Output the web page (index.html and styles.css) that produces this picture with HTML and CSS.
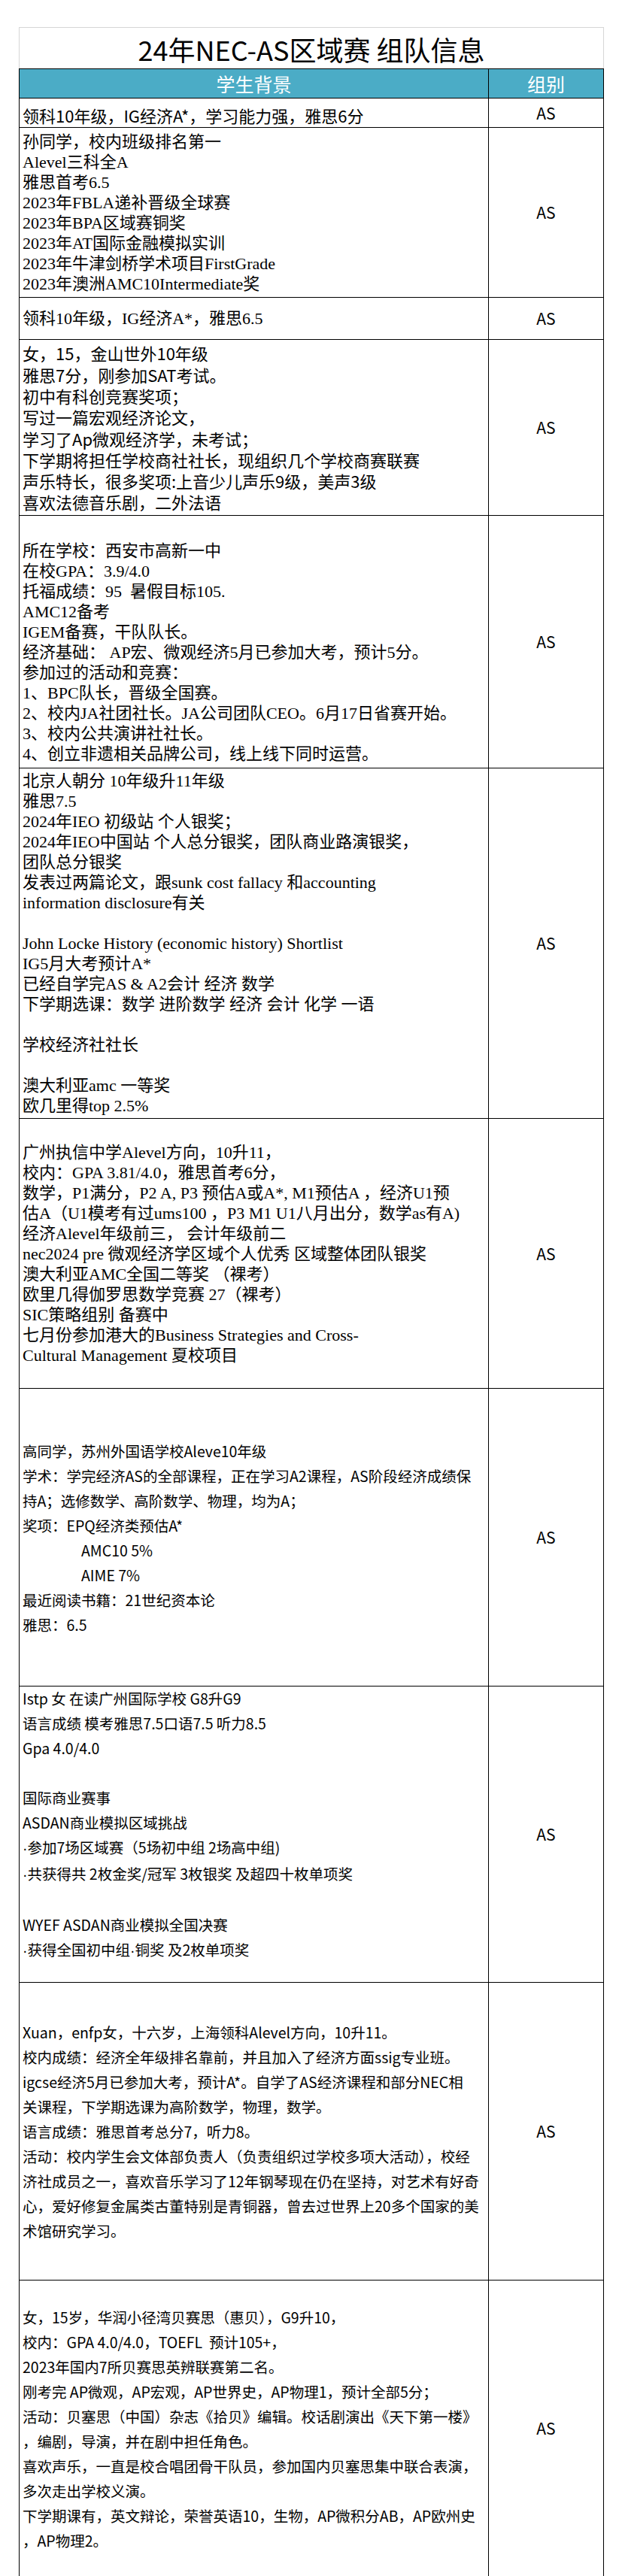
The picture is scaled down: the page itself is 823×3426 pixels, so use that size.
FILE: index.html
```html
<!DOCTYPE html>
<html lang="zh-CN">
<head>
<meta charset="utf-8">
<title>24年NEC-AS区域赛 组队信息</title>
<link rel="stylesheet" href="styles.css">
</head>
<body>
<div class="page">
  <div class="sheet">
    <div class="title">24年NEC-AS区域赛 组队信息</div>

    <div class="row hdr">
      <div class="cell">学生背景</div>
      <div class="grp">组别</div>
    </div>

    <div class="row r1">
      <div class="cell dx first"><p>领科10年级，IG经济A*，学习能力强，雅思6分</p></div>
      <div class="grp">AS</div>
    </div>

    <div class="row r2">
      <div class="cell serif">
        <p>孙同学，校内班级排名第一</p>
        <p>Alevel三科全A</p>
        <p>雅思首考6.5</p>
        <p>2023年FBLA递补晋级全球赛</p>
        <p>2023年BPA区域赛铜奖</p>
        <p>2023年AT国际金融模拟实训</p>
        <p>2023年牛津剑桥学术项目FirstGrade</p>
        <p>2023年澳洲AMC10Intermediate奖</p>
      </div>
      <div class="grp">AS</div>
    </div>

    <div class="row r3">
      <div class="cell serif"><p>领科10年级，IG经济A*，雅思6.5</p></div>
      <div class="grp">AS</div>
    </div>

    <div class="row r4">
      <div class="cell dx">
        <p>女，15，金山世外10年级</p>
        <p>雅思7分，刚参加SAT考试。</p>
        <p>初中有科创竞赛奖项；</p>
        <p>写过一篇宏观经济论文，</p>
        <p>学习了Ap微观经济学，未考试；</p>
        <p>下学期将担任学校商社社长，现组织几个学校商赛联赛</p>
        <p>声乐特长，很多奖项:上音少儿声乐9级，美声3级</p>
        <p>喜欢法德音乐剧，二外法语</p>
      </div>
      <div class="grp">AS</div>
    </div>

    <div class="row r5">
      <div class="cell serif">
        <p>&nbsp;</p>
        <p>所在学校：西安市高新一中</p>
        <p>在校GPA：3.9/4.0</p>
        <p>托福成绩：95  暑假目标105.</p>
        <p>AMC12备考</p>
        <p>IGEM备赛，干队队长。</p>
        <p>经济基础： AP宏、微观经济5月已参加大考，预计5分。</p>
        <p>参加过的活动和竞赛：</p>
        <p>1、BPC队长，晋级全国赛。</p>
        <p>2、校内JA社团社长。JA公司团队CEO。6月17日省赛开始。</p>
        <p>3、校内公共演讲社社长。</p>
        <p>4、创立非遗相关品牌公司，线上线下同时运营。</p>
      </div>
      <div class="grp">AS</div>
    </div>

    <div class="row r6">
      <div class="cell serif">
        <p>北京人朝分 10年级升11年级</p>
        <p>雅思7.5</p>
        <p>2024年IEO 初级站 个人银奖；</p>
        <p>2024年IEO中国站 个人总分银奖，团队商业路演银奖，</p>
        <p>团队总分银奖</p>
        <p>发表过两篇论文，跟sunk cost fallacy 和accounting</p>
        <p>information disclosure有关</p>
        <p>&nbsp;</p>
        <p>John Locke History (economic history) Shortlist</p>
        <p>IG5月大考预计A*</p>
        <p>已经自学完AS &amp; A2会计 经济 数学</p>
        <p>下学期选课：数学 进阶数学 经济 会计 化学 一语</p>
        <p>&nbsp;</p>
        <p>学校经济社社长</p>
        <p>&nbsp;</p>
        <p>澳大利亚amc 一等奖</p>
        <p>欧几里得top 2.5%</p>
      </div>
      <div class="grp">AS</div>
    </div>

    <div class="row r7">
      <div class="cell serif">
        <p>广州执信中学Alevel方向，10升11，</p>
        <p>校内：GPA 3.81/4.0，雅思首考6分，</p>
        <p>数学，P1满分，P2 A, P3 预估A或A*, M1预估A ，经济U1预</p>
        <p>估A（U1模考有过ums100 ，P3 M1 U1八月出分，数学as有A)</p>
        <p>经济Alevel年级前三， 会计年级前二</p>
        <p>nec2024 pre 微观经济学区域个人优秀 区域整体团队银奖</p>
        <p>澳大利亚AMC全国二等奖 （裸考）</p>
        <p>欧里几得伽罗思数学竞赛 27（裸考）</p>
        <p>SIC策略组别 备赛中</p>
        <p>七月份参加港大的Business Strategies and Cross-</p>
        <p>Cultural Management 夏校项目</p>
      </div>
      <div class="grp">AS</div>
    </div>

    <div class="row r8">
      <div class="cell yh">
        <p>高同学，苏州外国语学校Aleve10年级</p>
        <p>学术：学完经济AS的全部课程，正在学习A2课程，AS阶段经济成绩保</p>
        <p>持A；选修数学、高阶数学、物理，均为A；</p>
        <p>奖项：EPQ经济类预估A*</p>
        <p class="ind">AMC10 5%</p>
        <p class="ind">AIME 7%</p>
        <p>最近阅读书籍：21世纪资本论</p>
        <p>雅思：6.5</p>
      </div>
      <div class="grp">AS</div>
    </div>

    <div class="row r9">
      <div class="cell yh">
        <p>Istp 女 在读广州国际学校 G8升G9</p>
        <p>语言成绩 模考雅思7.5口语7.5 听力8.5</p>
        <p>Gpa 4.0/4.0</p>
        <p>&nbsp;</p>
        <p>国际商业赛事</p>
        <p>ASDAN商业模拟区域挑战</p>
        <p><span class="dot">·</span>参加7场区域赛（5场初中组 2场高中组)</p>
        <p><span class="dot">·</span>共获得共 2枚金奖/冠军 3枚银奖 及超四十枚单项奖</p>
        <p>&nbsp;</p>
        <p>WYEF ASDAN商业模拟全国决赛</p>
        <p><span class="dot">·</span>获得全国初中组<span class="dot">·</span>铜奖 及2枚单项奖</p>
      </div>
      <div class="grp">AS</div>
    </div>

    <div class="row r10">
      <div class="cell yh">
        <p>Xuan，enfp女，十六岁，上海领科Alevel方向，10升11。</p>
        <p>校内成绩：经济全年级排名靠前，并且加入了经济方面ssig专业班。</p>
        <p>igcse经济5月已参加大考，预计A*。自学了AS经济课程和部分NEC相</p>
        <p>关课程，下学期选课为高阶数学，物理，数学。</p>
        <p>语言成绩：雅思首考总分7，听力8。</p>
        <p>活动：校内学生会文体部负责人（负责组织过学校多项大活动），校经</p>
        <p>济社成员之一，喜欢音乐学习了12年钢琴现在仍在坚持，对艺术有好奇</p>
        <p>心，爱好修复金属类古董特别是青铜器，曾去过世界上20多个国家的美</p>
        <p>术馆研究学习。</p>
      </div>
      <div class="grp">AS</div>
    </div>

    <div class="row r11">
      <div class="cell yh">
        <p>女，15岁，华润小径湾贝赛思（惠贝），G9升10，</p>
        <p>校内：GPA 4.0/4.0，TOEFL  预计105+，</p>
        <p>2023年国内7所贝赛思英辨联赛第二名。</p>
        <p>刚考完 AP微观，AP宏观，AP世界史，AP物理1，预计全部5分；</p>
        <p>活动：贝塞思（中国）杂志《拾贝》编辑。校话剧演出《天下第一楼》</p>
        <p>，编剧，导演，并在剧中担任角色。</p>
        <p>喜欢声乐，一直是校合唱团骨干队员，参加国内贝塞思集中联合表演，</p>
        <p>多次走出学校义演。</p>
        <p>下学期课有，英文辩论，荣誉英语10，生物，AP微积分AB，AP欧州史</p>
        <p>，AP物理2。</p>
      </div>
      <div class="grp">AS</div>
    </div>
  </div>
</div>
</body>
</html>
```

FILE: styles.css
```css
* { box-sizing: border-box; }

body {
  margin: 0;
  background: #fff;
  color: #000;
  font-family: "Noto Sans CJK SC", "Noto Sans", sans-serif;
}

.page {
  padding: 36px 0 0 25px;
}

.sheet {
  width: 778px;
}

.title {
  height: 55px;
  border: 1px solid #d6d6d6;
  border-bottom: 0;
  display: flex;
  align-items: center;
  justify-content: center;
  font-size: 36px;
  line-height: 1;
  padding-top: 2px;
  white-space: nowrap;
}

.row {
  display: grid;
  grid-template-columns: 624px 152px;
  border-left: 1px solid #000;
  border-right: 1px solid #000;
  border-bottom: 1px solid #000;
}

.hdr {
  height: 40px;
  border-top: 1px solid #000;
  background: #4bacc6;
  color: #fff;
  font-size: 25px;
}

.cell {
  border-right: 1px solid #000;
  display: flex;
  flex-direction: column;
  justify-content: center;
  padding-left: 4px;
  overflow: hidden;
}

.hdr .cell {
  align-items: center;
  padding-left: 0;
}

.grp {
  display: flex;
  align-items: center;
  justify-content: center;
  font-size: 21px;
  line-height: 1;
}

.hdr .grp {
  font-size: 25px;
}

.cell p {
  margin: 0;
  white-space: pre;
}

.serif {
  font-family: "Liberation Serif", "Noto Sans CJK SC", serif;
  font-size: 22px;
  line-height: 27px;
}

.dx {
  font-size: 22px;
  line-height: 28.3px;
}

.yh {
  font-size: 19.5px;
  line-height: 33px;
}

.dot {
  font-family: "Liberation Sans", sans-serif;
}

.cell .ind {
  padding-left: 78px;
}

.first {
  padding-top: 6px;
}

.r1 { height: 39px; }
.r2 { height: 226px; }
.r3 { height: 56px; }
.r4 { height: 234px; }
.r5 { height: 336px; }
.r6 { height: 466px; }
.r7 { height: 359px; }
.r8 { height: 396px; }
.r9 { height: 394px; }
.r9 .cell { padding-bottom: 27px; }
.r10 { height: 396px; }
.r11 { height: 394px; }
```
